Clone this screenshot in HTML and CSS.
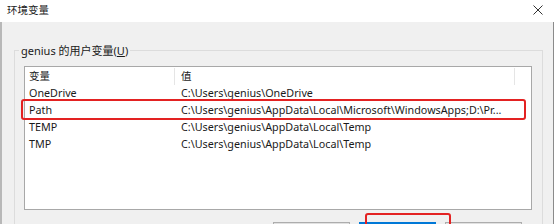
FILE: index.html
```html
<!DOCTYPE html>
<html lang="zh-CN">
<head>
<meta charset="utf-8">
<title>环境变量</title>
<link rel="stylesheet" href="styles.css">
</head>
<body>
<div class="window">
  <div class="titlebar">
    <span class="title">环境变量</span>
    <svg class="close" width="10" height="10" viewBox="0 0 10 10"><path d="M0.5 0.5 L9.5 9.5 M9.5 0.5 L0.5 9.5" stroke="#333" stroke-width="1" fill="none"/></svg>
  </div>
  <div class="content">
    <div class="group">
      <div class="group-label">genius 的用户变量(<u>U</u>)</div>
      <div class="listview">
        <div class="row header">
          <div class="c1">变量</div><div class="c2">值</div><div class="c3"></div>
        </div>
        <div class="row"><div class="c1">OneDrive</div><div class="c2">C:\Users\genius\OneDrive</div><div class="c3"></div></div>
        <div class="row"><div class="c1">Path</div><div class="c2">C:\Users\genius\AppData\Local\Microsoft\WindowsApps;D:\Pr...</div><div class="c3"></div></div>
        <div class="row"><div class="c1">TEMP</div><div class="c2">C:\Users\genius\AppData\Local\Temp</div><div class="c3"></div></div>
        <div class="row"><div class="c1">TMP</div><div class="c2">C:\Users\genius\AppData\Local\Temp</div><div class="c3"></div></div>
      </div>
      <div class="buttons">
        <div class="btn"></div>
        <div class="btn default"></div>
        <div class="btn"></div>
      </div>
    </div>
  </div>
  <div class="mark mark-row"></div>
  <div class="mark mark-btn"></div>
</div>
</body>
</html>
```
FILE: styles.css
```css
html, body {
  margin: 0;
  padding: 0;
}
body {
  width: 554px;
  height: 224px;
  overflow: hidden;
  background: #f0f0f0;
  font-family: "Noto Sans", "Noto Sans CJK SC", sans-serif;
  font-size: 10.75px;
  color: #1a1a1a;
}
.window {
  position: relative;
  width: 554px;
  height: 224px;
  overflow: hidden;
}
.titlebar {
  height: 22px;
  background: #ffffff;
  display: flex;
  align-items: center;
  justify-content: space-between;
  padding: 0 11px 3px 7px;
  box-sizing: border-box;
}
.title {
  font-size: 10.5px;
  color: #222;
}
.close {
  display: block;
}
.content {
  height: 202px;
  box-sizing: border-box;
  border-left: 2px solid #b8b8b8;
  border-right: 1px solid #8a8a8a;
  padding: 28px 10px 0 12px;
}
.group {
  position: relative;
  border: 1px solid #dcdcdc;
  border-bottom: none;
  height: 174px;
  box-sizing: border-box;
  padding: 15px 10px 0 9px;
}
.group-label {
  position: absolute;
  top: -8px;
  left: 4px;
  background: #f0f0f0;
  padding: 0 2px;
  font-size: 11px;
  line-height: 15px;
  color: #1a1a1a;
}
.listview {
  height: 144px;
  box-sizing: border-box;
  background: #fff;
  border: 1px solid #a8a8a8;
  padding-top: 1px;
}
.row {
  display: flex;
  height: 17px;
  line-height: 17px;
  white-space: nowrap;
}
.header .c1, .header .c2 {
  font-size: 10.5px;
  border-right: 1px solid #e5e5e5;
}
.c1 {
  width: 150px;
  padding-left: 4px;
  box-sizing: border-box;
}
.c2 {
  width: 340px;
  padding-left: 6px;
  box-sizing: border-box;
  overflow: hidden;
}
.c3 {
  flex: 1;
}
.buttons {
  display: flex;
  justify-content: flex-end;
  gap: 9px;
  margin-top: 12px;
  padding-right: 10px;
}
.btn {
  width: 77px;
  height: 14px;
  box-sizing: border-box;
  border: 1px solid #adadad;
  border-bottom: none;
  background: #e1e1e1;
}
.btn.default {
  border: 2px solid #0078d7;
  border-bottom: none;
}
.mark {
  position: absolute;
  border: 2px solid #e32222;
  border-radius: 3px;
  box-sizing: border-box;
}
.mark-row {
  left: 21px;
  top: 99px;
  width: 505px;
  height: 21px;
}
.mark-btn {
  left: 365px;
  top: 213px;
  width: 86px;
  height: 20px;
}
```
